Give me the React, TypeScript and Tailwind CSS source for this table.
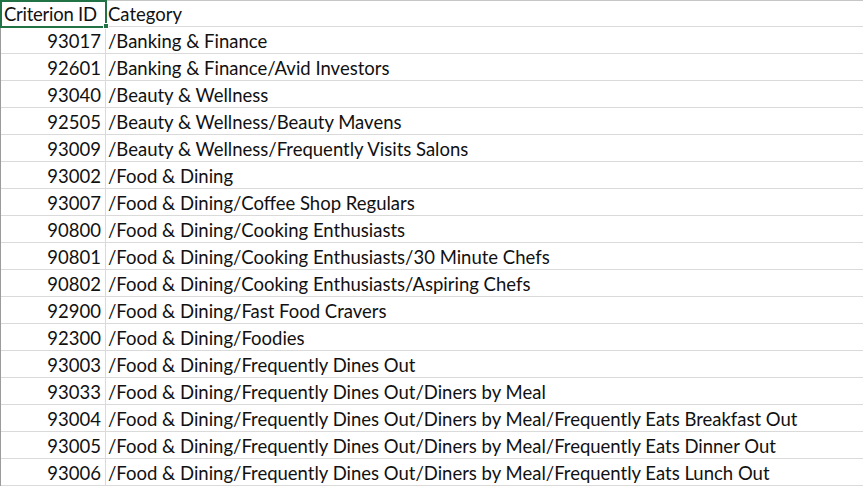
import React from "react";

const rows: [string, string][] = [
  ["93017", "/Banking & Finance"],
  ["92601", "/Banking & Finance/Avid Investors"],
  ["93040", "/Beauty & Wellness"],
  ["92505", "/Beauty & Wellness/Beauty Mavens"],
  ["93009", "/Beauty & Wellness/Frequently Visits Salons"],
  ["93002", "/Food & Dining"],
  ["93007", "/Food & Dining/Coffee Shop Regulars"],
  ["90800", "/Food & Dining/Cooking Enthusiasts"],
  ["90801", "/Food & Dining/Cooking Enthusiasts/30 Minute Chefs"],
  ["90802", "/Food & Dining/Cooking Enthusiasts/Aspiring Chefs"],
  ["92900", "/Food & Dining/Fast Food Cravers"],
  ["92300", "/Food & Dining/Foodies"],
  ["93003", "/Food & Dining/Frequently Dines Out"],
  ["93033", "/Food & Dining/Frequently Dines Out/Diners by Meal"],
  ["93004", "/Food & Dining/Frequently Dines Out/Diners by Meal/Frequently Eats Breakfast Out"],
  ["93005", "/Food & Dining/Frequently Dines Out/Diners by Meal/Frequently Eats Dinner Out"],
  ["93006", "/Food & Dining/Frequently Dines Out/Diners by Meal/Frequently Eats Lunch Out"],
];

export default function App() {
  return (
    <div className="w-[864px] h-[486px] overflow-hidden bg-white text-[#111]" style={{ fontFamily: "Lato, 'Noto Sans', sans-serif" }}>
      <div className="relative w-[863px] border-t border-[#c6c6c6] border-l border-l-[#9b9b9b] text-[18.5px]">
        <div className="flex h-[26px] border-b border-[#dadada]">
          <div className="w-[105px] shrink-0 border-r border-[#dadada] pl-[3px] pt-[1px] leading-[25px] tracking-[-0.25px] whitespace-nowrap">Criterion ID</div>
          <div className="flex-1 pl-[2px] pt-[1px] leading-[25px]">Category</div>
        </div>
        {rows.map(([id, cat]) => (
          <div key={id} className="flex h-[27px] border-b border-[#dadada]">
            <div className="w-[105px] shrink-0 border-r border-[#dadada] pr-[4px] pt-[1px] text-right leading-[26px]">{id}</div>
            <div className="flex-1 pl-[2px] pt-[1px] leading-[26px] whitespace-nowrap">{cat}</div>
          </div>
        ))}
        <div className="absolute left-[-1px] top-[-1px] w-[107px] h-[28px] border-2 border-[#217346]" />
        <div className="absolute left-[102px] top-[22px] w-[6px] h-[6px] bg-[#217346] border border-white" />
      </div>
    </div>
  );
}
